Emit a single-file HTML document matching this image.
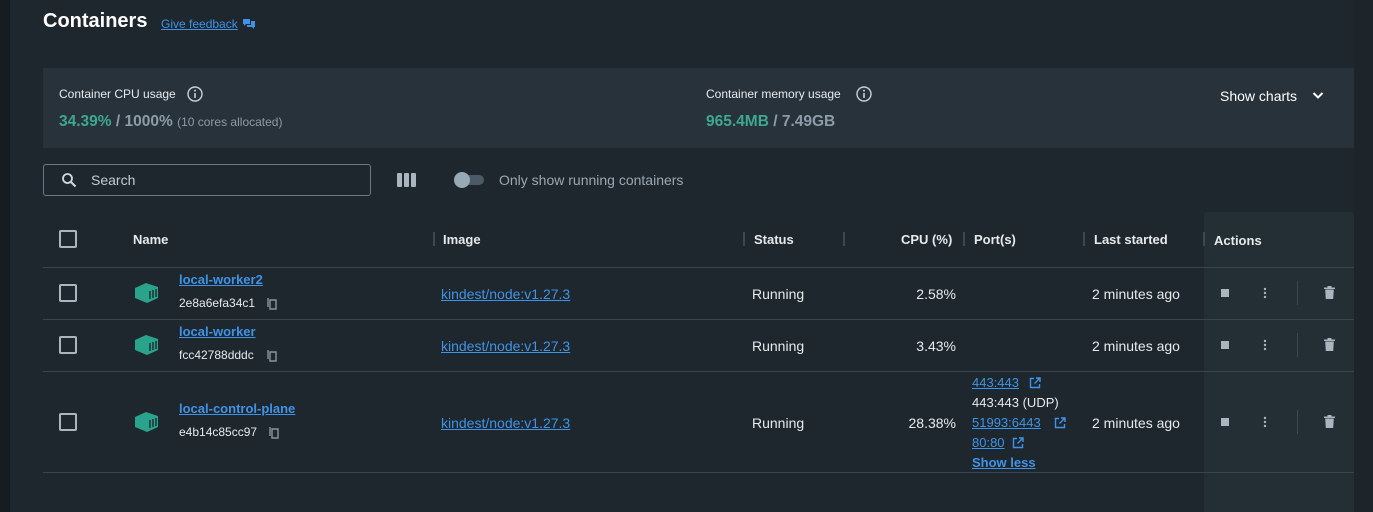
<!DOCTYPE html>
<html><head><meta charset="utf-8"><style>
*{margin:0;padding:0;box-sizing:border-box}
body{width:1373px;height:512px;background:#1f272e;font-family:"Liberation Sans",sans-serif;color:#e6eaed;position:relative;overflow:hidden;font-size:14px}
.a{position:absolute;white-space:nowrap}
.lnk{color:#3f93e6;text-decoration:underline}
.cb{position:absolute;width:18px;height:18px;border:2px solid #a9b6c0;border-radius:2px}
.hl{position:absolute;left:43px;width:1311px;height:1px;background:#39444d}
.sep{position:absolute;width:2px;height:14px;background:#3c4852;top:232px}
.bold{font-weight:bold}
.ico{position:absolute}
</style></head><body>
<div class="a" style="left:0;top:0;width:10px;height:512px;background:#171c20"></div>
<div class="a" style="left:1354px;top:0;width:19px;height:512px;background:#1d252b"></div>
<div class="a bold" style="left:43px;top:10px;font-size:20px;color:#fff">Containers</div>
<div class="a lnk" style="left:161px;top:17px;font-size:12px">Give feedback</div>
<svg class="ico" style="left:243px;top:19px" width="12" height="10" viewBox="0 0 12 10"><path d="M0 0h7v5H3L1 7V5H0z" fill="#3f93e6"/><path d="M8 2h4v6h-1v2l-2-2H4V6h4z" fill="#3f93e6"/></svg>

<div class="a" style="left:43px;top:68px;width:1311px;height:80px;background:#27323b"></div>
<div class="a" style="left:59px;top:87px;font-size:12px">Container CPU usage</div>
<svg class="ico" style="left:187px;top:86px" width="16" height="16" viewBox="0 0 16 16"><circle cx="8" cy="8" r="7" fill="none" stroke="#c6d0d7" stroke-width="1.4"/><rect x="7.2" y="7" width="1.6" height="5" fill="#c6d0d7"/><circle cx="8" cy="4.6" r="1" fill="#c6d0d7"/></svg>
<div class="a" style="left:59px;top:113px;font-size:15.5px;font-weight:bold"><span style="color:#3fa88f">34.39%</span><span style="color:#8c9ca8"> / 1000% </span><span style="color:#8c9ca8;font-size:12px;font-weight:normal">(10 cores allocated)</span></div>
<div class="a" style="left:706px;top:87px;font-size:12px">Container memory usage</div>
<svg class="ico" style="left:856px;top:86px" width="16" height="16" viewBox="0 0 16 16"><circle cx="8" cy="8" r="7" fill="none" stroke="#c6d0d7" stroke-width="1.4"/><rect x="7.2" y="7" width="1.6" height="5" fill="#c6d0d7"/><circle cx="8" cy="4.6" r="1" fill="#c6d0d7"/></svg>
<div class="a" style="left:706px;top:113px;font-size:15.5px;font-weight:bold"><span style="color:#3fa88f">965.4MB</span><span style="color:#8c9ca8"> / 7.49GB</span></div>
<div class="a" style="left:1220px;top:88px;font-size:14px;color:#fff">Show charts</div>
<svg class="ico" style="left:1312px;top:91px" width="12" height="9" viewBox="0 0 12 9"><path d="M1.5 2l4.5 4.5L10.5 2" fill="none" stroke="#fff" stroke-width="2"/></svg>

<div class="a" style="left:43px;top:164px;width:328px;height:32px;border:1px solid #6b7883;border-radius:3px"></div>
<svg class="ico" style="left:61px;top:172px" width="16" height="16" viewBox="0 0 16 16"><circle cx="6.5" cy="6.5" r="4.5" fill="none" stroke="#d0d8de" stroke-width="1.8"/><path d="M10 10l4.5 4.5" stroke="#d0d8de" stroke-width="2"/></svg>
<div class="a" style="left:91px;top:172px;font-size:14px;color:#c2ccd3">Search</div>
<svg class="ico" style="left:397px;top:173px" width="20" height="14" viewBox="0 0 20 14"><rect x="0" y="0" width="5" height="14" rx="1" fill="#a9b6c0"/><rect x="7" y="0" width="5" height="14" rx="1" fill="#a9b6c0"/><rect x="14" y="0" width="5" height="14" rx="1" fill="#a9b6c0"/></svg>
<div class="a" style="left:456px;top:175px;width:28px;height:10px;border-radius:5px;background:#4b5a66"></div>
<div class="a" style="left:454px;top:172px;width:16px;height:16px;border-radius:8px;background:#97a9b7"></div>
<div class="a" style="left:499px;top:172px;font-size:14px;color:#9aa8b3">Only show running containers</div>

<div class="a" style="left:1204px;top:212px;width:150px;height:300px;background:#242e35;border-radius:4px 4px 0 0"></div>
<div class="cb" style="left:59px;top:230px"></div>
<div class="a bold" style="left:133px;top:232px;font-size:13px">Name</div>
<div class="sep" style="left:433px"></div><div class="a bold" style="left:443px;top:232px;font-size:13px">Image</div>
<div class="sep" style="left:743px"></div><div class="a bold" style="left:754px;top:232px;font-size:13px">Status</div>
<div class="sep" style="left:843px"></div><div class="a bold" style="left:901px;top:232px;font-size:13px">CPU (%)</div>
<div class="sep" style="left:963px"></div><div class="a bold" style="left:974px;top:232px;font-size:13px">Port(s)</div>
<div class="sep" style="left:1083px"></div><div class="a bold" style="left:1094px;top:232px;font-size:13px">Last started</div>
<div class="sep" style="left:1203px"></div><div class="a bold" style="left:1214px;top:233px;font-size:13px">Actions</div>
<div class="hl" style="top:267px"></div>
<div class="hl" style="top:319px"></div>
<div class="hl" style="top:371px"></div>
<div class="hl" style="top:472px"></div>

<div class="cb" style="left:59px;top:284px"></div>
<div class="cb" style="left:59px;top:336px"></div>
<div class="cb" style="left:59px;top:413px"></div>

<svg class="ico" style="left:134px;top:282px" width="26" height="22" viewBox="0 0 26 22"><path d="M1 6l11-5 12 4v11l-11 5L1 16z" fill="#2aa38c"/><path d="M16 9v8M19 8v8M22 7v8" stroke="#1f272e" stroke-width="1.4"/></svg>
<svg class="ico" style="left:134px;top:334px" width="26" height="22" viewBox="0 0 26 22"><path d="M1 6l11-5 12 4v11l-11 5L1 16z" fill="#2aa38c"/><path d="M16 9v8M19 8v8M22 7v8" stroke="#1f272e" stroke-width="1.4"/></svg>
<svg class="ico" style="left:134px;top:411px" width="26" height="22" viewBox="0 0 26 22"><path d="M1 6l11-5 12 4v11l-11 5L1 16z" fill="#2aa38c"/><path d="M16 9v8M19 8v8M22 7v8" stroke="#1f272e" stroke-width="1.4"/></svg>

<div class="a lnk bold" style="left:179px;top:272px;font-size:13px">local-worker2</div>
<div class="a" style="left:179px;top:296px;font-size:12px">2e8a6efa34c1</div>
<div class="a lnk bold" style="left:179px;top:324px;font-size:13px">local-worker</div>
<div class="a" style="left:179px;top:348px;font-size:12px">fcc42788dddc</div>
<div class="a lnk bold" style="left:179px;top:401px;font-size:13px">local-control-plane</div>
<div class="a" style="left:179px;top:425px;font-size:12px">e4b14c85cc97</div>
<svg class="ico" style="left:267px;top:297px" width="11" height="13" viewBox="0 0 11 13"><path d="M1 1v9M3 3h6v9H3z" fill="none" stroke="#8795a0" stroke-width="1.4"/></svg>
<svg class="ico" style="left:267px;top:349px" width="11" height="13" viewBox="0 0 11 13"><path d="M1 1v9M3 3h6v9H3z" fill="none" stroke="#8795a0" stroke-width="1.4"/></svg>
<svg class="ico" style="left:269px;top:426px" width="11" height="13" viewBox="0 0 11 13"><path d="M1 1v9M3 3h6v9H3z" fill="none" stroke="#8795a0" stroke-width="1.4"/></svg>

<div class="a lnk" style="left:441px;top:286px;font-size:14px">kindest/node:v1.27.3</div>
<div class="a lnk" style="left:441px;top:338px;font-size:14px">kindest/node:v1.27.3</div>
<div class="a lnk" style="left:441px;top:415px;font-size:14px">kindest/node:v1.27.3</div>
<div class="a" style="left:752px;top:286px">Running</div>
<div class="a" style="left:752px;top:338px">Running</div>
<div class="a" style="left:752px;top:415px">Running</div>
<div class="a" style="left:906px;top:286px;width:50px;text-align:right">2.58%</div>
<div class="a" style="left:906px;top:338px;width:50px;text-align:right">3.43%</div>
<div class="a" style="left:896px;top:415px;width:60px;text-align:right">28.38%</div>
<div class="a" style="left:1092px;top:286px">2 minutes ago</div>
<div class="a" style="left:1092px;top:338px">2 minutes ago</div>
<div class="a" style="left:1092px;top:415px">2 minutes ago</div>

<div class="a lnk" style="left:972px;top:375px;font-size:13px">443:443</div>
<div class="a" style="left:972px;top:395px;font-size:13px">443:443 (UDP)</div>
<div class="a lnk" style="left:972px;top:415px;font-size:13px">51993:6443</div>
<div class="a lnk" style="left:972px;top:435px;font-size:13px">80:80</div>
<div class="a lnk bold" style="left:972px;top:455px;font-size:13px">Show less</div>
<svg class="ico" style="left:1029px;top:377px" width="12" height="12" viewBox="0 0 12 12"><path d="M5 1.5H1.5v9h9V7M7 1h4v4M11 1L5.5 6.5" fill="none" stroke="#3f93e6" stroke-width="1.4"/></svg>
<svg class="ico" style="left:1054px;top:417px" width="12" height="12" viewBox="0 0 12 12"><path d="M5 1.5H1.5v9h9V7M7 1h4v4M11 1L5.5 6.5" fill="none" stroke="#3f93e6" stroke-width="1.4"/></svg>
<svg class="ico" style="left:1012px;top:437px" width="12" height="12" viewBox="0 0 12 12"><path d="M5 1.5H1.5v9h9V7M7 1h4v4M11 1L5.5 6.5" fill="none" stroke="#3f93e6" stroke-width="1.4"/></svg>

<div class="a" style="left:1221px;top:289px;width:8px;height:8px;background:#a9b6c0"></div>
<div class="a" style="left:1221px;top:341px;width:8px;height:8px;background:#a9b6c0"></div>
<div class="a" style="left:1221px;top:418px;width:8px;height:8px;background:#a9b6c0"></div>
<svg class="ico" style="left:1263px;top:287px" width="4" height="12" viewBox="0 0 4 12"><circle cx="2" cy="2" r="1.2" fill="#a9b6c0"/><circle cx="2" cy="6" r="1.2" fill="#a9b6c0"/><circle cx="2" cy="10" r="1.2" fill="#a9b6c0"/></svg>
<svg class="ico" style="left:1263px;top:339px" width="4" height="12" viewBox="0 0 4 12"><circle cx="2" cy="2" r="1.2" fill="#a9b6c0"/><circle cx="2" cy="6" r="1.2" fill="#a9b6c0"/><circle cx="2" cy="10" r="1.2" fill="#a9b6c0"/></svg>
<svg class="ico" style="left:1263px;top:416px" width="4" height="12" viewBox="0 0 4 12"><circle cx="2" cy="2" r="1.2" fill="#a9b6c0"/><circle cx="2" cy="6" r="1.2" fill="#a9b6c0"/><circle cx="2" cy="10" r="1.2" fill="#a9b6c0"/></svg>
<div class="a" style="left:1297px;top:281px;width:1px;height:24px;background:#3c4852"></div>
<div class="a" style="left:1297px;top:333px;width:1px;height:24px;background:#3c4852"></div>
<div class="a" style="left:1297px;top:410px;width:1px;height:24px;background:#3c4852"></div>
<svg class="ico" style="left:1324px;top:286px" width="11" height="13" viewBox="0 0 11 13"><path d="M0 1.5h11v1.5H0zM3.5 0h4v1.5h-4zM1.2 3.5h8.6l-.6 9.5H1.8z" fill="#a9b6c0"/></svg>
<svg class="ico" style="left:1324px;top:338px" width="11" height="13" viewBox="0 0 11 13"><path d="M0 1.5h11v1.5H0zM3.5 0h4v1.5h-4zM1.2 3.5h8.6l-.6 9.5H1.8z" fill="#a9b6c0"/></svg>
<svg class="ico" style="left:1324px;top:415px" width="11" height="13" viewBox="0 0 11 13"><path d="M0 1.5h11v1.5H0zM3.5 0h4v1.5h-4zM1.2 3.5h8.6l-.6 9.5H1.8z" fill="#a9b6c0"/></svg>
</body></html>
